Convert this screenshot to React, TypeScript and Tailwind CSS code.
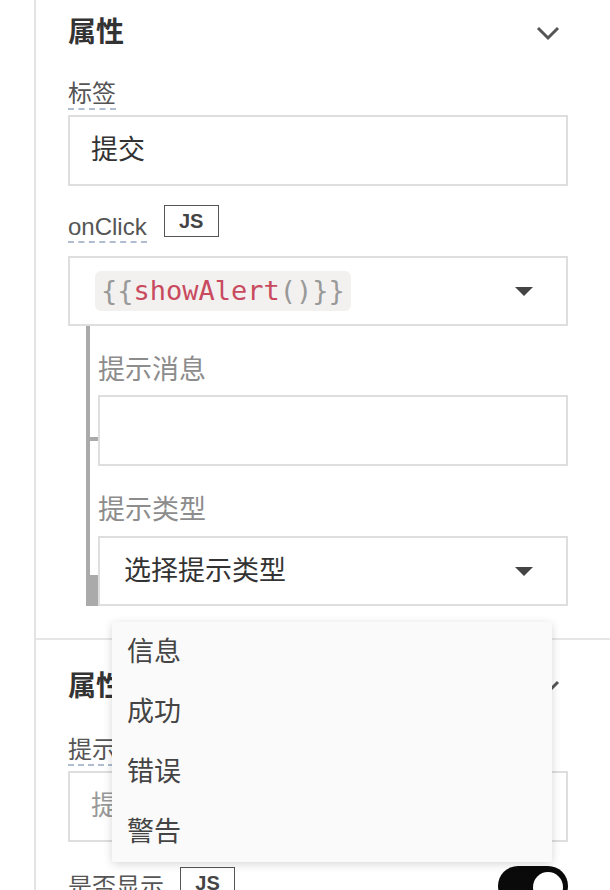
import React from "react";

const sans = { fontFamily: '"Liberation Sans", "Noto Sans CJK SC", sans-serif' };

function Chevron() {
  return (
    <svg width="24" height="16" viewBox="0 0 24 16" className="mr-[8px]">
      <polyline points="2,3 12,13 22,3" fill="none" stroke="#555" strokeWidth="3" />
    </svg>
  );
}

function Caret() {
  return (
    <svg width="18" height="9" viewBox="0 0 18 9">
      <polygon points="0,0 18,0 9,9" fill="#444" />
    </svg>
  );
}

function FieldLabel({ children }: { children: React.ReactNode }) {
  return (
    <span className="inline-block border-b-2 border-dashed border-[#b0bdd0] text-[24px] leading-[28px] text-[#555]">
      {children}
    </span>
  );
}

function JsBadge() {
  return (
    <span className="flex h-[32px] w-[55px] items-center justify-center border-[1.5px] border-[#555] text-[20px] font-bold leading-none text-[#444]">
      JS
    </span>
  );
}

function Toggle() {
  return (
    <div className="relative h-[40px] w-[70px] rounded-full bg-[#0a0a0a]">
      <div className="absolute right-[5px] top-[6px] h-[30px] w-[30px] rounded-full bg-white" />
    </div>
  );
}

const alertTypes = ["信息", "成功", "错误", "警告"];

export default function App() {
  return (
    <div className="h-[890px] w-[610px] overflow-hidden bg-white" style={sans}>
      <div className="ml-[34px] min-h-full border-l-2 border-[#e3e3e3]">
        {/* 按钮属性 */}
        <section className="border-b-2 border-[#e6e6e6] pb-[32px] pl-[32px] pr-[42px] pt-[13px]">
          <div className="flex h-[40px] items-center justify-between">
            <h2 className="text-[28px] font-semibold leading-[40px] text-[#333]">属性</h2>
            <Chevron />
          </div>

          <div className="mt-[27px]">
            <FieldLabel>标签</FieldLabel>
          </div>
          <div className="mt-[5px] flex h-[71px] items-center border-2 border-[#dedede] px-[21px] text-[27px] text-[#333]">
            提交
          </div>

          <div className="mt-[19px] flex items-start">
            <div className="mt-[8px]">
              <FieldLabel>onClick</FieldLabel>
            </div>
            <div className="ml-[17px]">
              <JsBadge />
            </div>
          </div>

          <div className="mt-[13px] flex h-[70px] items-center justify-between border-2 border-[#dedede] pl-[25px] pr-[33px]">
            <span
              className="h-[40px] rounded-[6px] bg-[#f2f1ef] px-[6px] text-[27px] leading-[40px]"
              style={{ fontFamily: '"DejaVu Sans Mono", "Liberation Mono", monospace' }}
            >
              <span className="text-[#999]">{"{{"}</span>
              <span className="text-[#c94a5e]">showAlert</span>
              <span className="text-[#999]">()</span>
              <span className="text-[#999]">{"}}"}</span>
            </span>
            <Caret />
          </div>

          {/* showAlert 参数 */}
          <div className="relative ml-[18px] border-l-4 border-[#aaa] pl-[8px] pt-[26px]">
            <div className="absolute left-0 top-[111px] h-[4px] w-[8px] bg-[#aaa]" />
            <div className="absolute bottom-0 left-[-4px] h-[31px] w-[12px] bg-[#aaa]" />

            <div className="text-[27px] leading-[36px] text-[#8c8c8c]">提示消息</div>
            <div className="mt-[7px] h-[71px] border-2 border-[#dedede]" />

            <div className="mt-[26px] text-[27px] leading-[36px] text-[#8c8c8c]">提示类型</div>
            <div className="relative mt-[8px] flex h-[70px] items-center justify-between border-2 border-[#dedede] pl-[24px] pr-[33px]">
              <span className="text-[27px] text-[#333]">选择提示类型</span>
              <Caret />

              <ul className="absolute left-[12px] top-[84px] z-10 w-[440px] rounded-[2px] bg-[#fafafa] shadow-[0_2px_10px_rgba(0,0,0,0.16)]">
                {alertTypes.map((t) => (
                  <li key={t} className="flex h-[60px] items-center pl-[15px] text-[27px] text-[#444]">
                    {t}
                  </li>
                ))}
              </ul>
            </div>
          </div>
        </section>

        {/* 提示属性 */}
        <section className="pl-[32px] pr-[42px] pt-[27px]">
          <div className="flex h-[40px] items-center justify-between">
            <h2 className="text-[28px] font-semibold leading-[40px] text-[#333]">属性</h2>
            <Chevron />
          </div>

          <div className="mt-[29px]">
            <FieldLabel>提示消息</FieldLabel>
          </div>
          <div className="mt-[5px] flex h-[71px] items-center border-2 border-[#dedede] px-[21px] text-[27px] text-[#999]">
            提示消息内容
          </div>

          <div className="mt-[24px] flex items-start justify-between">
            <div className="flex items-start gap-[16px] pt-[1px]">
              <div className="mt-[6px]">
                <FieldLabel>是否显示</FieldLabel>
              </div>
              <JsBadge />
            </div>
            <Toggle />
          </div>
        </section>
      </div>
    </div>
  );
}
